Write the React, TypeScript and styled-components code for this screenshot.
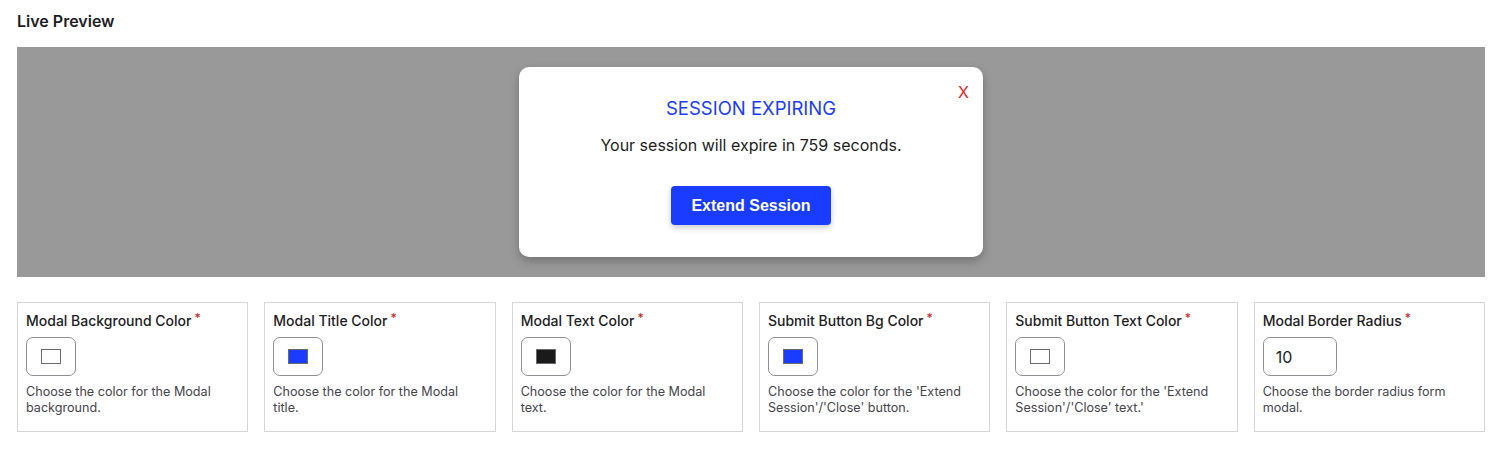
import React from "react";
import styled, { createGlobalStyle } from "styled-components";

const Global = createGlobalStyle`
  html, body { margin: 0; padding: 0; background: #fff; }
  body { font-family: Inter, "Noto Sans", sans-serif; color: #1d1d1f; }
  * { box-sizing: border-box; }
`;

const Page = styled.div`
  padding: 11px 20px 0 17px;
  display: flex;
  flex-direction: column;
`;

const Heading = styled.h2`
  margin: 0;
  font-size: 16px;
  font-weight: 600;
  line-height: 20px;
  color: #1d1d24;
`;

const PreviewArea = styled.div`
  margin-top: 16px;
  height: 230px;
  background: #999999;
  display: flex;
  justify-content: center;
  align-items: flex-start;
  padding-top: 20px;
`;

const Modal = styled.div`
  position: relative;
  width: 464px;
  height: 190px;
  background: #ffffff;
  border-radius: 10px;
  box-shadow: 0 4px 10px rgba(0, 0, 0, 0.25);
  display: flex;
  flex-direction: column;
  align-items: center;
  padding-top: 29px;
`;

const Close = styled.span`
  position: absolute;
  top: 15px;
  right: 14px;
  color: #e8231f;
  font-size: 16px;
  line-height: 20px;
`;

const ModalTitle = styled.div`
  font-size: 18.5px;
  line-height: 24px;
  color: #1a3cff;
`;

const ModalText = styled.div`
  margin-top: 15px;
  font-size: 16px;
  line-height: 20px;
  color: #1d1d1d;
`;

const ExtendButton = styled.button`
  margin-top: 31px;
  width: 160px;
  height: 39px;
  border: none;
  border-radius: 4px;
  background: #1a3cff;
  color: #fff;
  font-family: "Liberation Sans", Arial, sans-serif;
  font-weight: 700;
  font-size: 16px;
  box-shadow: 0 3px 6px rgba(0, 0, 0, 0.2);
`;

const Grid = styled.div`
  margin-top: 25px;
  display: grid;
  grid-template-columns: repeat(6, 1fr);
  gap: 16px;
`;

const Card = styled.div`
  border: 1px solid #d6d6d6;
  height: 130px;
  padding: 9px 20px 0 8px;
`;

const Label = styled.div`
  font-size: 14px;
  font-weight: 500;
  line-height: 18px;
  color: #1d1d24;
  white-space: nowrap;
`;

const Star = styled.span`
  color: #cc2b2b;
  font-size: 12px;
  vertical-align: top;
  margin-left: 3px;
  position: relative;
  top: -3px;
`;

const Swatch = styled.div`
  margin-top: 7px;
  width: 50px;
  height: 39px;
  border: 1px solid #8f8f95;
  border-radius: 7px;
  display: flex;
  align-items: center;
  justify-content: center;
`;

const Chip = styled.div<{ $color: string }>`
  width: 20px;
  height: 15px;
  border: 1px solid #6b6b6b;
  background: ${(p) => p.$color};
`;

const NumberInput = styled.div`
  margin-top: 7px;
  width: 74px;
  height: 39px;
  border: 1px solid #8f8f95;
  border-radius: 7px;
  display: flex;
  align-items: center;
  padding-left: 12px;
  font-size: 16px;
  color: #1d1d1d;
`;

const Desc = styled.div`
  margin-top: 8px;
  font-size: 12.6px;
  line-height: 16px;
  color: #45454d;
`;

const fields = [
  { label: "Modal Background Color", color: "#ffffff", desc: "Choose the color for the Modal background." },
  { label: "Modal Title Color", color: "#1a3cff", desc: "Choose the color for the Modal title." },
  { label: "Modal Text Color", color: "#1a1a1a", desc: "Choose the color for the Modal text." },
  { label: "Submit Button Bg Color", color: "#1a3cff", desc: "Choose the color for the 'Extend Session'/'Close' button." },
  { label: "Submit Button Text Color", color: "#ffffff", desc: "Choose the color for the 'Extend Session'/'Close' text.'" },
];

export default function App() {
  return (
    <>
      <Global />
      <Page>
        <Heading>Live Preview</Heading>
        <PreviewArea>
          <Modal>
            <Close>X</Close>
            <ModalTitle>SESSION EXPIRING</ModalTitle>
            <ModalText>Your session will expire in 759 seconds.</ModalText>
            <ExtendButton>Extend Session</ExtendButton>
          </Modal>
        </PreviewArea>
        <Grid>
          {fields.map((f) => (
            <Card key={f.label}>
              <Label>
                {f.label}
                <Star>*</Star>
              </Label>
              <Swatch>
                <Chip $color={f.color} />
              </Swatch>
              <Desc>{f.desc}</Desc>
            </Card>
          ))}
          <Card>
            <Label>
              Modal Border Radius
              <Star>*</Star>
            </Label>
            <NumberInput>10</NumberInput>
            <Desc>Choose the border radius form modal.</Desc>
          </Card>
        </Grid>
      </Page>
    </>
  );
}
